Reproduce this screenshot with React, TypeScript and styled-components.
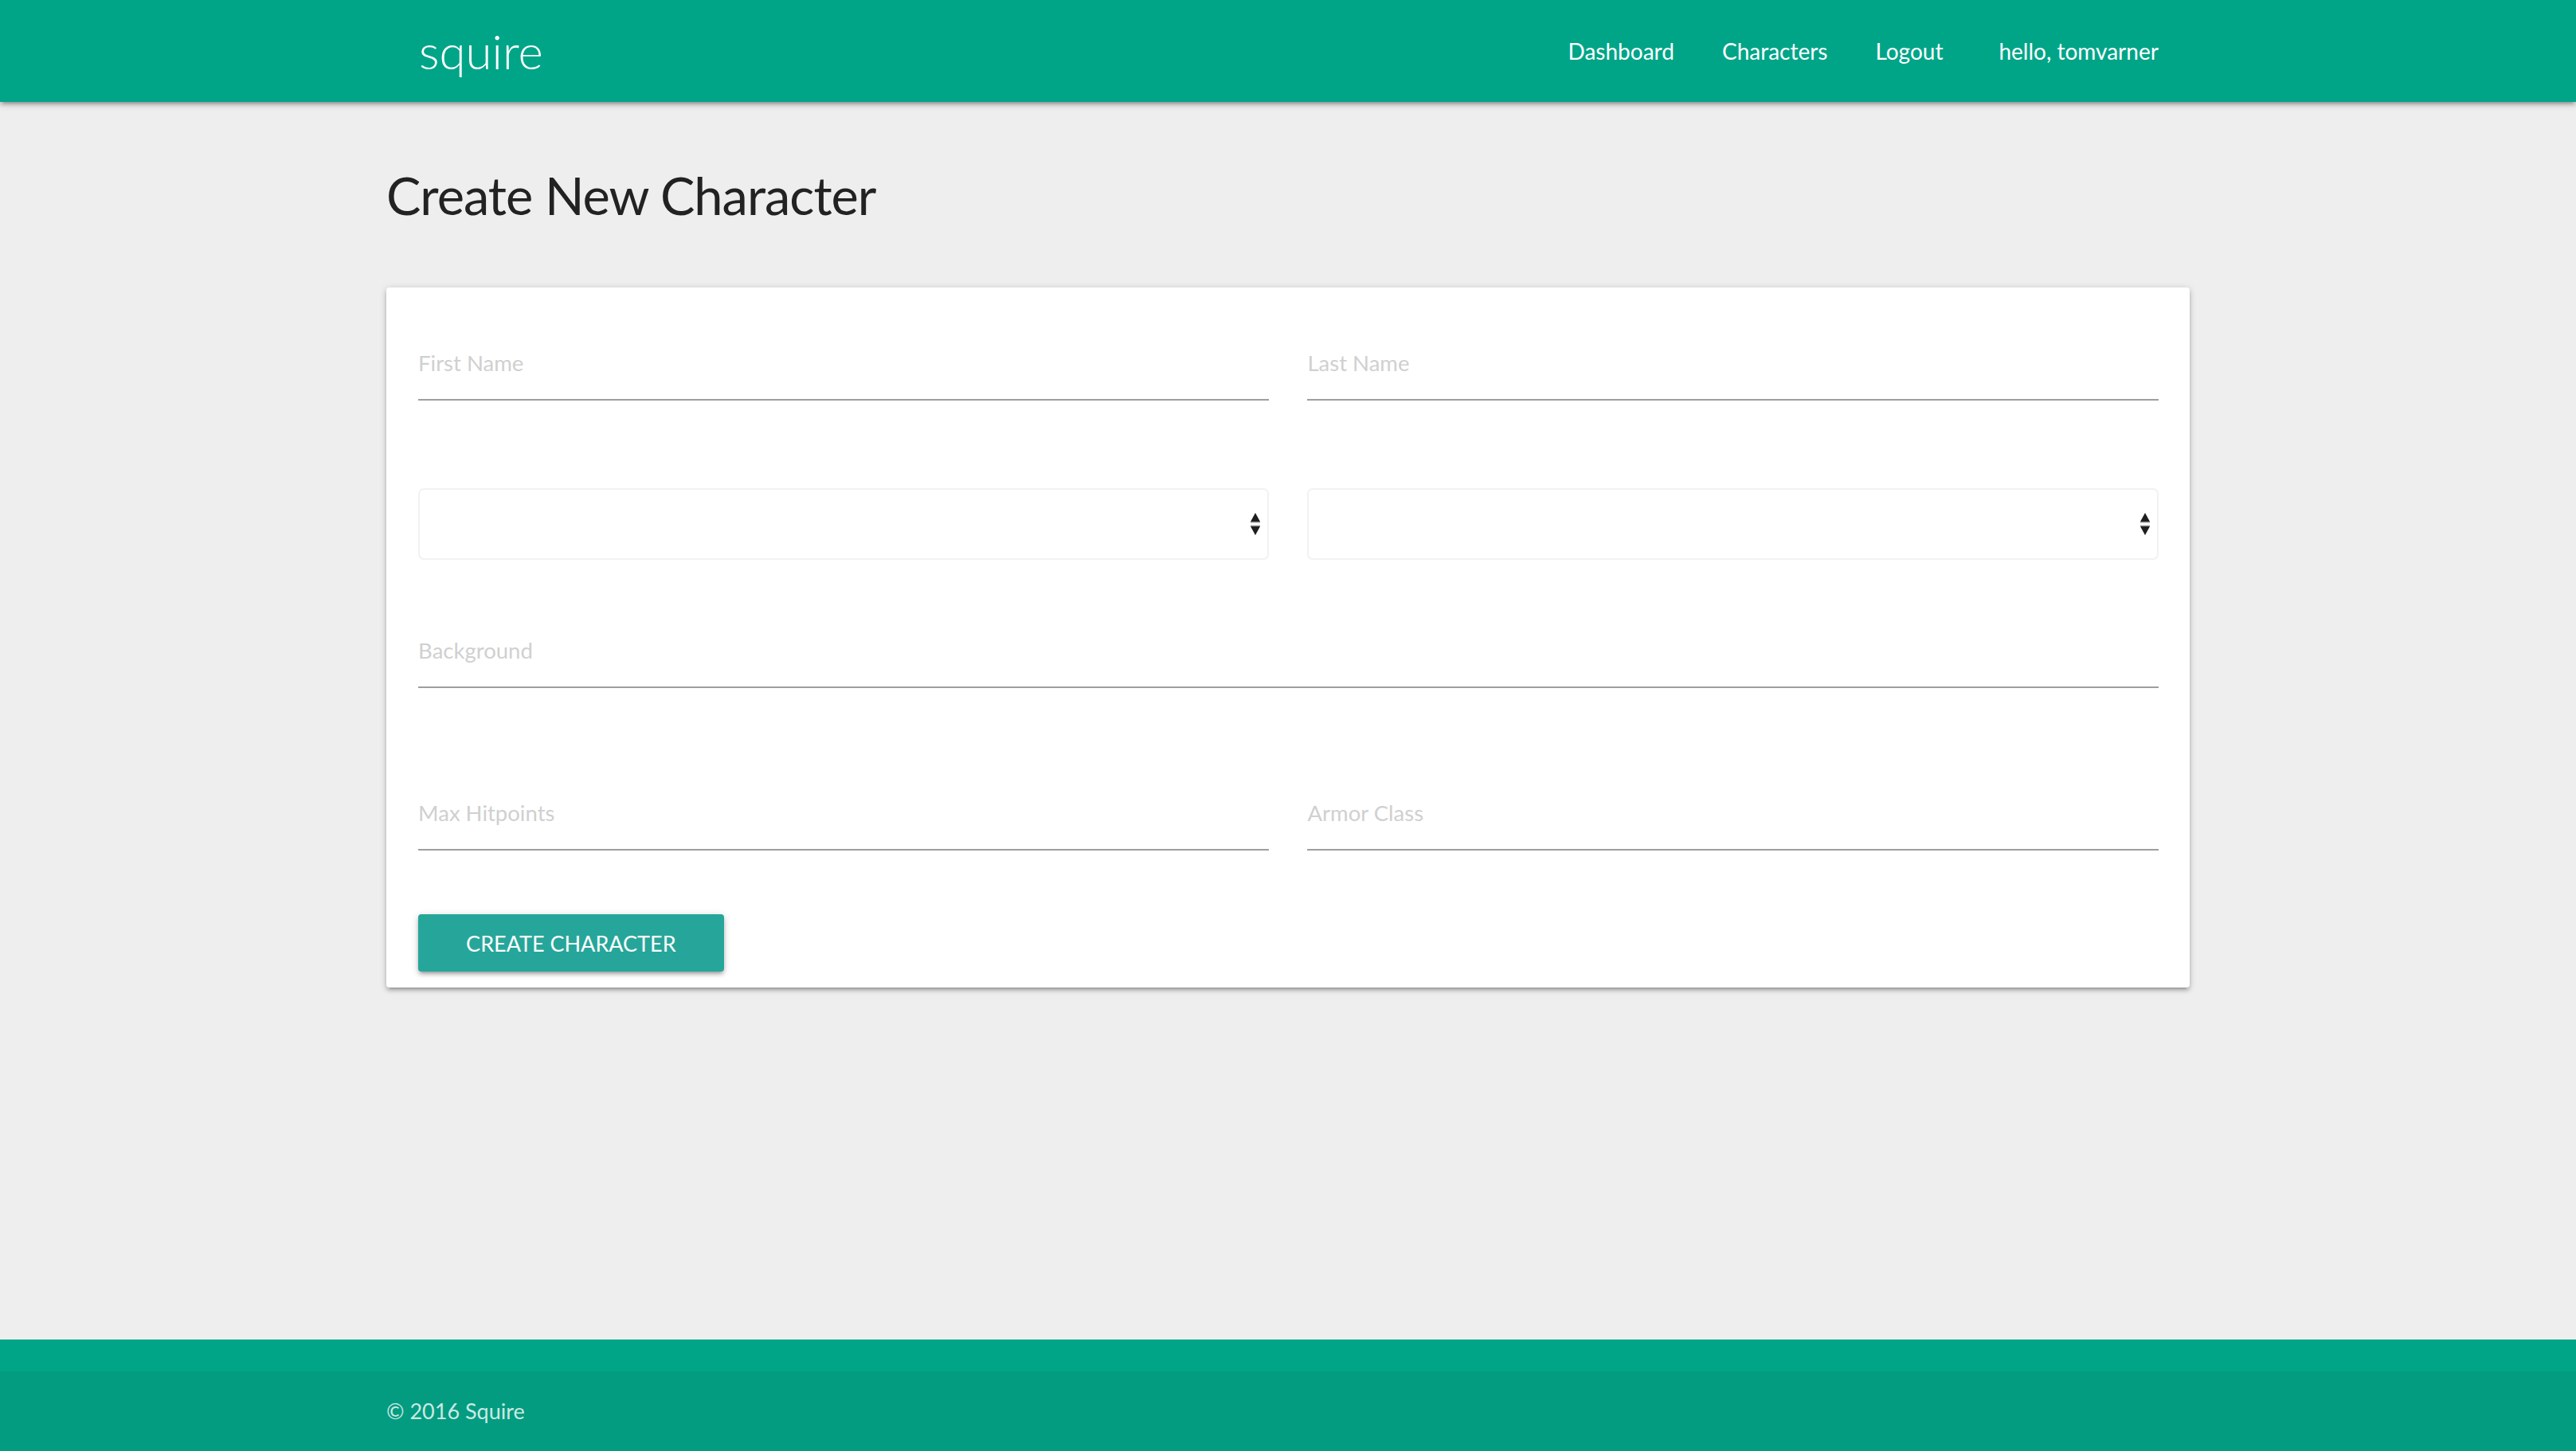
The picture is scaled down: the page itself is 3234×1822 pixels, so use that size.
import React from "react";
import styled, { createGlobalStyle } from "styled-components";

const GlobalStyle = createGlobalStyle`
  html, body {
    margin: 0;
    padding: 0;
  }
  body {
    background: #eeeeee;
    font-family: Lato, "Open Sans", sans-serif;
    color: #222222;
  }
  * { box-sizing: border-box; }
`;

const Page = styled.div`
  min-height: 100vh;
  display: flex;
  flex-direction: column;
`;

const NavBar = styled.nav`
  height: 128px;
  background: #00a588;
  box-shadow: 0 4px 4px 0 rgba(0, 0, 0, 0.14), 0 6px 2px -4px rgba(0, 0, 0, 0.12),
    0 2px 10px 0 rgba(0, 0, 0, 0.2);
  position: relative;
  z-index: 2;
`;

const Container = styled.div`
  width: 70%;
  margin: 0 auto;
`;

const NavInner = styled(Container)`
  height: 128px;
  display: flex;
  align-items: center;
  justify-content: space-between;
  padding: 0 39px 0 41px;
`;

const Brand = styled.a`
  font-size: 60px;
  font-weight: 300;
  line-height: 128px;
  color: #ffffff;
  text-decoration: none;
`;

const NavList = styled.ul`
  list-style: none;
  margin: 0;
  padding: 0;
  display: flex;
  align-items: center;
`;

const NavItem = styled.li<{ $greeting?: boolean }>`
  font-size: 28px;
  line-height: 128px;
  color: #ffffff;
  padding: ${(p) => (p.$greeting ? "0 0 0 40px" : "0 30px")};
  cursor: ${(p) => (p.$greeting ? "default" : "pointer")};
`;

const Main = styled.main`
  flex: 1;
`;

const Title = styled.h1`
  margin: 77px 0 76px;
  font-size: 65px;
  font-weight: 400;
  line-height: 80px;
  letter-spacing: -1px;
  color: #222222;
`;

const Card = styled.form`
  background: #ffffff;
  border-radius: 4px;
  padding: 20px 39px 20px 40px;
  box-shadow: 0 4px 4px 0 rgba(0, 0, 0, 0.14), 0 6px 2px -4px rgba(0, 0, 0, 0.12),
    0 2px 10px 0 rgba(0, 0, 0, 0.2);
`;

const Row = styled.div<{ $mt: number; $single?: boolean }>`
  display: grid;
  grid-template-columns: ${(p) => (p.$single ? "1fr" : "1fr 1fr")};
  column-gap: 48px;
  margin-top: ${(p) => p.$mt}px;
`;

const TextInput = styled.input`
  display: block;
  width: 100%;
  height: 90px;
  padding: 0;
  margin: 0;
  border: none;
  border-bottom: 2px solid #9e9e9e;
  background: transparent;
  outline: none;
  font-family: Lato, "Open Sans", sans-serif;
  font-size: 27.5px;
  line-height: 90px;
  color: #222222;
  box-sizing: content-box;
  &::placeholder {
    color: #d0d0d0;
  }
`;

const SelectWrap = styled.div`
  position: relative;
  height: 90px;
`;

const Select = styled.select`
  display: block;
  width: 100%;
  height: 90px;
  appearance: none;
  -webkit-appearance: none;
  background: #ffffff;
  border: 2px solid #f2f2f2;
  border-radius: 7px;
  outline: none;
  font-family: Lato, "Open Sans", sans-serif;
  font-size: 28px;
  padding: 0 20px;
`;

const Arrows = styled.svg`
  position: absolute;
  right: 10px;
  top: 31px;
  width: 14px;
  height: 29px;
  pointer-events: none;
`;

const Button = styled.button`
  display: block;
  height: 72px;
  padding: 0 60px;
  border: none;
  border-radius: 4px;
  background: #26a69a;
  color: #ffffff;
  font-family: Lato, "Open Sans", sans-serif;
  font-size: 27px;
  letter-spacing: 0;
  text-transform: uppercase;
  cursor: pointer;
  box-shadow: 0 4px 4px 0 rgba(0, 0, 0, 0.14), 0 6px 2px -4px rgba(0, 0, 0, 0.12),
    0 2px 10px 0 rgba(0, 0, 0, 0.2);
`;

const Footer = styled.footer`
  background: #00a588;
  padding-top: 40px;
`;

const Copyright = styled.div`
  background: rgba(51, 51, 51, 0.08);
  height: 100px;
  line-height: 100px;
  font-size: 27px;
  color: rgba(255, 255, 255, 0.8);
`;

const SelectArrows = () => (
  <Arrows viewBox="0 0 14 29">
    <polygon points="7,0 13,11 1,11" fill="#1e1e1e" />
    <rect x="1" y="11" width="12" height="1.5" fill="#9a9a9a" />
    <rect x="1" y="15.5" width="12" height="1.5" fill="#9a9a9a" />
    <polygon points="1,17 13,17 7,28" fill="#1e1e1e" />
  </Arrows>
);

export default function App() {
  return (
    <Page>
      <GlobalStyle />
      <NavBar>
        <NavInner>
          <Brand href="#">squire</Brand>
          <NavList>
            <NavItem>Dashboard</NavItem>
            <NavItem>Characters</NavItem>
            <NavItem>Logout</NavItem>
            <NavItem $greeting>hello, tomvarner</NavItem>
          </NavList>
        </NavInner>
      </NavBar>
      <Main>
        <Container>
          <Title>Create New Character</Title>
          <Card onSubmit={(e) => e.preventDefault()}>
            <Row $mt={30}>
              <TextInput placeholder="First Name" />
              <TextInput placeholder="Last Name" />
            </Row>
            <Row $mt={110}>
              <SelectWrap>
                <Select defaultValue="">
                  <option value="" />
                </Select>
                <SelectArrows />
              </SelectWrap>
              <SelectWrap>
                <Select defaultValue="">
                  <option value="" />
                </Select>
                <SelectArrows />
              </SelectWrap>
            </Row>
            <Row $mt={69} $single>
              <TextInput placeholder="Background" />
            </Row>
            <Row $mt={112}>
              <TextInput placeholder="Max Hitpoints" />
              <TextInput placeholder="Armor Class" />
            </Row>
            <Row $mt={80} $single>
              <div>
                <Button type="submit">Create Character</Button>
              </div>
            </Row>
          </Card>
        </Container>
      </Main>
      <Footer>
        <Copyright>
          <Container>© 2016 Squire</Container>
        </Copyright>
      </Footer>
    </Page>
  );
}
